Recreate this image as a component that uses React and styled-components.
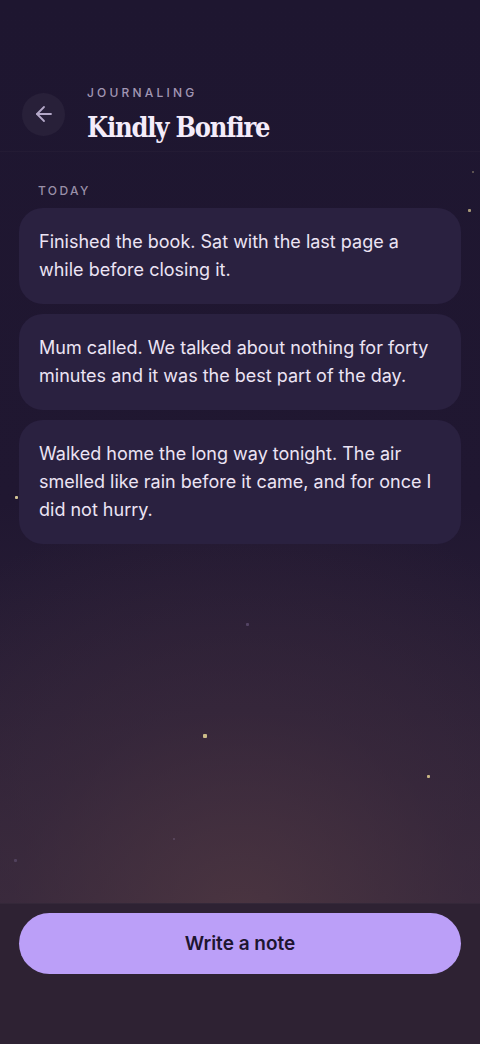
import React from "react";
import styled, { createGlobalStyle } from "styled-components";

const Global = createGlobalStyle`
  html, body { margin: 0; padding: 0; background: #1e1630; }
  body { font-family: Inter, "Noto Sans", sans-serif; -webkit-font-smoothing: antialiased; }
  * { box-sizing: border-box; }
`;

const Page = styled.div`
  position: relative;
  width: 480px;
  height: 1044px;
  overflow: hidden;
  display: flex;
  flex-direction: column;
  background:
    radial-gradient(ellipse 95% 40% at 50% 88%, rgba(80, 56, 66, 0.8) 0%, rgba(64, 45, 62, 0.5) 50%, rgba(30, 22, 48, 0) 100%),
    linear-gradient(180deg, #1e1630 0%, #201731 48%, #2a1f36 68%, #34273b 86%, #34273b 100%);
`;

const Star = styled.span`
  position: absolute;
  width: ${(p) => p.size}px;
  height: ${(p) => p.size}px;
  background: ${(p) => p.color};
  opacity: ${(p) => p.o};
  border-radius: 1px;
`;

const Header = styled.header`
  display: flex;
  align-items: center;
  gap: 22px;
  padding: 83px 22px 6px;
  border-bottom: 1px solid rgba(255, 255, 255, 0.025);
`;

const BackButton = styled.button`
  width: 43px;
  height: 43px;
  border-radius: 50%;
  border: none;
  background: #282039;
  display: flex;
  align-items: center;
  justify-content: center;
  padding: 0;
  color: #b4a8c8;
`;

const TitleBlock = styled.div`
  display: flex;
  flex-direction: column;
  gap: 11px;
  margin-top: 3px;
`;

const Eyebrow = styled.div`
  font-size: 12px;
  font-weight: 500;
  letter-spacing: 3.2px;
  color: #a296b4;
  line-height: 14px;
`;

const Title = styled.h1`
  margin: 0;
  font-family: "DejaVu Serif Condensed", "DejaVu Serif", "Liberation Serif", serif;
  font-weight: 700;
  font-size: 27px;
  line-height: 34px;
  letter-spacing: -1.2px;
  color: #f4ecfa;
`;

const Section = styled.section`
  display: flex;
  flex-direction: column;
  padding: 32px 19px 0;
`;

const SectionLabel = styled.div`
  font-size: 12px;
  font-weight: 500;
  letter-spacing: 2.4px;
  color: #9a90a8;
  padding-left: 19px;
  line-height: 14px;
  margin-bottom: 10px;
`;

const CardList = styled.div`
  display: flex;
  flex-direction: column;
  gap: 10px;
`;

const Card = styled.article`
  background: #2a2140;
  border-radius: 24px;
  padding: 20px;
  font-size: 18px;
  line-height: 28px;
  color: #ece4f4;
`;

const Spacer = styled.div`
  flex: 1;
`;

const Footer = styled.footer`
  border-top: 1px solid rgba(255, 255, 255, 0.03);
  background: #2e2233;
  padding: 9px 19px 70px;
`;

const PrimaryButton = styled.button`
  width: 100%;
  height: 61px;
  border: none;
  border-radius: 31px;
  background: #bb9ff8;
  color: #1e1530;
  font-family: Inter, "Noto Sans", sans-serif;
  font-size: 19px;
  font-weight: 600;
`;

const notes = [
  "Finished the book. Sat with the last page a while before closing it.",
  "Mum called. We talked about nothing for forty minutes and it was the best part of the day.",
  "Walked home the long way tonight. The air smelled like rain before it came, and for once I did not hurry.",
];

const stars = [
  { x: 472, y: 171, s: 2, c: "#a89a7a", o: 0.6 },
  { x: 468, y: 209, s: 3, c: "#c9b98a", o: 0.8 },
  { x: 15, y: 496, s: 3, c: "#e6d7a0", o: 0.9 },
  { x: 246, y: 623, s: 3, c: "#6a5a80", o: 0.6 },
  { x: 203, y: 734, s: 4, c: "#dccb90", o: 0.9 },
  { x: 427, y: 775, s: 3, c: "#d8c48c", o: 0.9 },
  { x: 173, y: 838, s: 2, c: "#7a6a8a", o: 0.5 },
  { x: 14, y: 859, s: 3, c: "#6a5a7e", o: 0.5 },
];

export default function App() {
  return (
    <>
      <Global />
      <Page>
        {stars.map((s, i) => (
          <Star key={i} size={s.s} color={s.c} o={s.o} style={{ left: s.x, top: s.y }} />
        ))}
        <Header>
          <BackButton aria-label="Back">
            <svg width="24" height="24" viewBox="0 0 24 24" fill="none" stroke="currentColor" strokeWidth="1.8" strokeLinecap="round" strokeLinejoin="round">
              <path d="M19 12H5" />
              <path d="M12 19l-7-7 7-7" />
            </svg>
          </BackButton>
          <TitleBlock>
            <Eyebrow>JOURNALING</Eyebrow>
            <Title>Kindly Bonfire</Title>
          </TitleBlock>
        </Header>
        <Section>
          <SectionLabel>TODAY</SectionLabel>
          <CardList>
            {notes.map((n, i) => (
              <Card key={i}>{n}</Card>
            ))}
          </CardList>
        </Section>
        <Spacer />
        <Footer>
          <PrimaryButton>Write a note</PrimaryButton>
        </Footer>
      </Page>
    </>
  );
}
